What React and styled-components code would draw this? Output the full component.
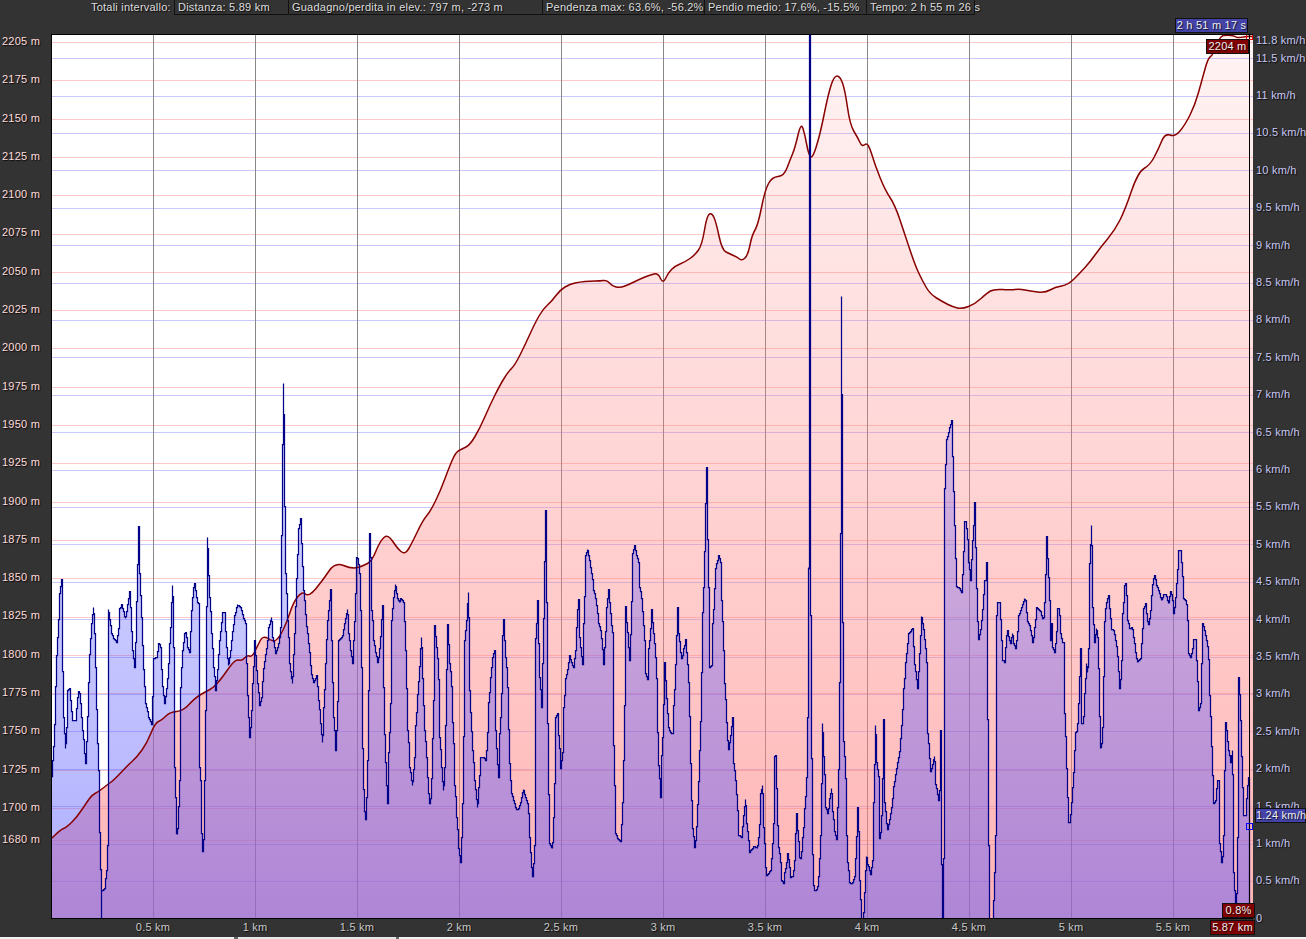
import React from 'react'
import styled, { createGlobalStyle } from 'styled-components'

const GlobalStyle = createGlobalStyle`
    html, body {
        margin: 0;
        padding: 0;
        background: #333333;
    }
`

// plot area in page pixels, the svg viewBox uses these directly
const PLOT = { left: 52, top: 35, width: 1201, height: 883, bottom: 918 }

// points read off the enlarged profile, x,y per crop
const trace = (x0, y0, sy, text) =>
    text.trim().split(/\s+/).map(pair => {
        const [x, y] = pair.split(',').map(Number)
        return [x0 + x / 3, y0 + y / sy]
    })

const speedPoints = [
    ...trace(40, 500, 3, `36,830 36,780 41,712 47,480 52,410 57,280 63,238 65,480 70,650 74,745 78,680 82,570 87,565 92,625 97,660 105,660
        110,600 113,572 118,580 122,640 127,690 132,760 135,790 140,680 146,480 152,380 158,322 163,400 165,500 170,710 175,810 177,900`),
    ...trace(0, 780, 3, `296,118 300,268 302,325 301,418 303,418 304,330 312,325 316,295 320,243 323,100 324,40`),
    ...trace(40, 500, 3, `203,328 209,370 214,400 220,415 228,425 234,385 238,325 243,312 248,330 254,355 260,320 267,272 270,320 275,440
        282,500 285,425 290,220 295,78 297,220 303,350 308,490 315,610 325,650 333,672 340,475 348,470 355,428 360,440 365,550 372,610
        380,550 388,430 395,255 398,350 403,800`),
    ...trace(0, 780, 3, `524,0 527,155 530,163 533,105 537,0`),
    ...trace(40, 500, 3, `420,560 425,460 432,400 436,395 442,440 447,455 453,330 458,265 462,250 470,305 475,310 478,800`),
    ...trace(0, 780, 3, `600,0 603,160 606,212 610,178 613,100 613,0`),
    ...trace(40, 500, 3, `500,110 503,210 508,290 513,400 520,500 525,570 530,520 537,420 542,375 547,335 552,335 557,430 563,495 568,470
        575,400 583,345 590,313 600,320 608,350 615,370 620,570 625,650 628,712 632,650 637,550 642,420 648,510 652,550 657,615 663,590
        668,510 680,430 685,380 692,350 697,410 705,460 715,430 720,380 728,-350 734,200 742,360 747,490 755,548 762,400 770,180 775,85
        780,55 785,180 790,270 797,370 805,430 812,520 820,545 828,525 835,600 840,670 845,725 850,620 855,490 860,370 870,268 875,520
        880,650 885,750 890,650 895,420 905,410 912,370 920,328 925,400 930,450 936,488 940,420 945,280 948,172`),
    ...trace(340, 520, 3, `52,113 57,160 62,345 65,635 68,780 71,865 75,898 78,830 81,720 84,510 87,38 90,110 94,270 100,360 105,395 112,425
        118,385 122,310 126,255 128,445 131,615 135,725 138,795 141,848 145,695 150,550 153,300 158,240 164,193 170,230 176,247 180,233
        190,245 195,390 199,505 202,630 208,740 215,795 222,710 226,615 230,535 236,455 242,350 248,535 253,630 258,710 263,810 268,850
        272,815 275,690 279,540 282,315 288,380 293,435 298,650 303,740 308,810 313,740 317,490 321,313 327,430 332,470 337,605 343,795
        349,890 354,985 360,1025 365,900 368,745 372,360 378,300 383,217 387,510 392,620 397,690 402,780 407,825 410,860 415,800 420,710
        428,710 436,720 440,660 445,545 450,470 456,410 462,390 465,630 470,720 474,770 478,640 483,520 486,345 489,298 494,400 500,460
        506,710 512,815 520,840 527,868 535,863 540,845 548,808 555,830 563,855 567,950 573,1040 577,1067 582,975 586,355 591,240 594,370
        598,470 603,562 607,430 611,160 616,-30 620,520 623,785 628,970 635,985 640,890 646,590 651,580 655,645 660,745 666,695 670,560
        675,475 680,455 687,405 692,425 699,440 705,390 710,275 714,238 718,345`),
    ...trace(570, 460, 3, `27,530 32,580 36,612 40,490 45,285 50,268 55,285 60,320 65,350 70,390 75,415 80,450 85,490 90,510 95,550 99,612
        103,560 108,440 114,388 118,425 122,490 126,515 128,815 132,975 136,1120 142,1135 150,1142 155,1060 158,955 162,735 165,437 169,485
        174,560 177,600 182,470 186,280 192,255 198,285 204,305 208,380 213,415 218,480 222,540 226,640 231,658 235,565 240,505 243,448
        248,510 254,570 258,655 262,815 265,915 270,1012 274,885 278,775 282,607 285,660 289,715 293,800 300,815 306,820 310,735 314,640
        318,525 321,442 325,520 330,575 334,595 340,565 345,538 350,600 355,665 359,870 363,1020 367,1105 372,1162 376,1140 380,1055
        388,870 392,695 396,455 400,380 404,165 408,22 410,190 414,380 418,620 423,615 427,490 431,405 435,325 439,310 444,285 450,305
        454,420 458,545 463,670 467,765 470,830 474,868 480,825 486,772 490,910 495,960 500,1030 505,1125 513,1130 518,1075 524,1018
        528,1090 533,1130 537,1175 545,1165 550,1157 560,1163 566,1115 571,1000 575,975 580,1100 585,1220 589,1245 600,1230 605,1170
        609,1090 612,888 616,885 620,1080 625,1160 630,1205 634,1260 639,1270 643,1235 648,1205 652,1178 656,1215 661,1250 667,1248
        672,1200 676,1120 678,1060 682,1110 687,1190 691,1195 697,1130 703,1045 708,950 711,770 714,320`),
    ...trace(790, 280, 2.45, `54,705 56,-600 58,-600 60,820 62,1070 65,1370 68,1480 73,1495 80,1490 85,1460 88,1415 92,1305 95,1085 98,1150 102,1210
        106,1290 112,1305 118,1270 122,1245 127,1300 132,1350 138,1370 142,1290 146,1105 150,620 152,38 155,765 160,1130 165,1220 168,1360
        172,1425 177,1475 185,1478 192,1460 197,1385 201,1292 205,1350 208,1470 212,1565 218,1565 222,1500 227,1410 232,1430 240,1455
        246,1420 250,1280 254,1090 258,1180 264,1215 267,1368 272,1340 276,1220 279,1075 283,1280 288,1330 291,1345 296,1325 303,1290
        310,1240 315,1210 320,1185 327,1155 333,1090 340,1000 345,935 350,900 353,865 360,860 366,852 372,940 377,970 381,1000 386,930
        390,870 392,822 398,850 403,880 408,935 412,1110 417,1170 420,1203 425,1190 431,1165 436,1235 440,1255 444,1275 447,1250 450,1103
        453,1430 456,1565 459,1415 463,510 467,393 473,375 478,360 483,343 488,490 492,600 495,680 498,750 507,755 513,765 518,690 522,590
        525,590 530,620 535,690 540,735 545,650 549,600 552,545 555,655 560,820 564,880 570,855 577,805 581,735 585,735 588,690 592,1075
        595,1385 598,1565 607,1565 612,1450 616,1360 618,820 622,790 628,790 632,870 637,930 642,935 647,875 651,858 656,880 660,890`),
    ...trace(1000, 520, 3, `35,340 40,370 45,385 50,345 55,285 60,270 65,255 71,235 75,240 80,300 87,315 92,340 97,365 103,320 108,262 115,268
        120,272 125,295 130,290 134,200 138,48 141,115 144,170 147,240 150,360 153,310 156,380 162,395 167,350 172,265 176,265 180,340
        186,365 191,365 193,580 197,715 200,805 204,905 208,905 213,845 217,800 222,690 226,635 230,630 234,550 240,385 244,610 248,605
        253,520 257,430 260,455 265,385 268,130 272,15 276,260 282,365 287,325 292,350 296,540 299,685 305,660 308,545 311,315 315,265
        320,235 324,225 328,265 332,325 340,330 345,360 350,390 353,440 358,505 364,420 367,280 372,195 376,188 382,300 388,325 395,320
        400,350 405,395 410,425 420,415 425,340 430,265 435,250 440,300 445,312 450,270 455,195 460,175 463,165 468,195 476,215 482,240
        490,222 497,222 503,250 510,212 515,230 520,280 525,230 530,160 535,90 540,90 545,150 550,235 557,240 562,300 565,400 570,410
        575,390 580,358 585,358 590,460 595,570 600,550 606,308 612,330 618,360 623,390 628,525 632,650 636,765 640,850 645,840 650,780
        655,780 658,970 663,1025 668,995 673,750 676,605 680,655 685,690 690,725 695,690 700,1055 705,1195 710,1070 715,470 720,600 725,780
        730,885 735,885 740,800 745,770 748,1195 750,1195 750,918`),
]

const elevationPoints = trace(0, 0, 1, `156,838 180,830 201,827 231,817 261,802 276,795 294,792 321,785 342,780 384,765 411,757 441,743 465,723
    486,720 510,712 549,711 585,698 615,692 639,688 666,678 705,659 726,661 741,655 756,657 771,647 789,635 819,642 837,638 861,622 879,603
    906,591 927,597 969,580 1005,562 1056,569 1089,566 1116,561 1140,541 1164,534 1191,548 1215,555 1236,543 1269,520 1290,512 1320,492
    1350,465 1368,452 1386,449 1410,445 1440,428 1470,405 1500,385 1524,372 1545,365 1575,345 1605,323 1629,309 1656,301 1680,290 1710,284
    1740,282 1770,281 1800,281 1821,280 1836,286 1860,288 1890,284 1920,279 1950,275 1974,273 1989,284 2004,273 2025,266 2055,262 2085,255
    2106,245 2121,215 2136,213 2148,222 2166,250 2190,254 2211,257 2226,261 2244,255 2256,235 2274,225 2295,190 2316,177 2352,176 2370,160
    2385,148 2403,122 2415,135 2424,152 2436,160 2460,135 2484,95 2502,76 2520,76 2535,90 2550,125 2574,138 2586,147 2604,142 2625,165
    2655,190 2685,205 2715,235 2745,265 2766,280 2790,294 2829,302 2859,307 2886,309 2925,304 2961,293 2982,289 3030,290 3060,289 3090,291
    3135,293 3165,287 3204,285 3240,273 3270,262 3300,248 3345,230 3375,210 3414,172 3450,165 3474,150 3495,133 3525,137 3555,125 3585,105
    3606,80 3624,58 3639,55 3660,36 3681,35 3705,36 3711,38 3750,36 3759,37`)

// speed is drawn in pixel columns: fill in every column between samples, then step
const stepPath = points => {
    const parts = [`M${Math.round(points[0][0]) + 0.5} ${Math.round(points[0][1]) + 0.5}`]
    let column = Math.round(points[0][0])
    const stepTo = (x, y) => {
        const next = Math.min(Math.max(column, x), 1249)
        parts.push(next === column ? `V${Math.round(y) + 0.5}` : `H${next + 0.5} V${Math.round(y) + 0.5}`)
        column = next
    }
    for (let i = 1; i < points.length; i++) {
        const [x0, y0] = points[i - 1]
        const [x1, y1] = points[i]
        for (let c = Math.ceil(x0); c < x1; c++) {
            stepTo(c, y0 + (y1 - y0) * (c - x0) / (x1 - x0))
        }
        stepTo(Math.round(x1), y1)
    }
    return parts.join(' ')
}

// elevation is a soft curve, midpoints between samples smooth the corners
const curvePath = points => {
    const parts = [`M${points[0][0]} ${points[0][1]}`]
    for (let i = 1; i < points.length - 1; i++) {
        const [x, y] = points[i]
        const [nx, ny] = points[i + 1]
        parts.push(`Q${x.toFixed(1)} ${y} ${((x + nx) / 2).toFixed(1)} ${(y + ny) / 2}`)
    }
    const last = points[points.length - 1]
    parts.push(`L${last[0]} ${last[1]}`)
    return parts.join(' ')
}

const closeArea = (path, right) => `${path} L${right} ${PLOT.bottom} L${PLOT.left} ${PLOT.bottom} Z`

const elevationTicks = [2205, 2175, 2150, 2125, 2100, 2075, 2050, 2025, 2000, 1975, 1950, 1925, 1900, 1875, 1850, 1825, 1800, 1775, 1750, 1725, 1700]
const speedTicks = ['11.5', '11', '10.5', '10', '9.5', '9', '8.5', '8', '7.5', '7', '6.5', '6', '5.5', '5', '4.5', '4', '3.5', '3', '2.5', '2', '1.5', '1', '0.5']
const distanceTicks = ['0.5', '1', '1.5', '2', '2.5', '3', '3.5', '4', '4.5', '5', '5.5']
const summaryCells = [
    { text: 'Distanza: 5.89 km', width: 114 },
    { text: 'Guadagno/perdita in elev.: 797 m, -273 m', width: 254 },
    { text: 'Pendenza max: 63.6%, -56.2%', width: 162 },
    { text: 'Pendio medio: 17.6%, -15.5%', width: 162 },
    { text: 'Tempo: 2 h 55 m 26 s', width: 109 },
]

const Page = styled.div`
    width: 1306px;
    height: 939px;
    display: flex;
    flex-direction: column;
    overflow: hidden;
    background-color: #333333;
    font-family: "Liberation Sans", Arial, sans-serif;
    font-size: 11px;
    letter-spacing: 0.22px;
    text-shadow: 1px 1px 1px rgba(0, 0, 0, 0.8);
`

const SummaryBar = styled.div`
    height: 15px;
    margin-bottom: 19px;
    padding-left: 91px;
    display: flex;
    color: #dddddd;
    line-height: 14px;
`

const SummaryTitle = styled.div`
    width: 83px;
    white-space: nowrap;
`

const SummaryCell = styled.div`
    width: ${props => props.$width}px;
    box-sizing: border-box;
    padding-left: 3px;
    border-left: 1px solid #111111;
    border-bottom: 1px solid #111111;
    white-space: nowrap;

    &:last-child {
        border-right: 1px solid #111111;
    }
`

const ChartGrid = styled.div`
    display: grid;
    grid-template-columns: 51px 1202px 53px;
    grid-template-rows: 885px 18px;
`

const ElevationAxis = styled.div`
    margin-top: -12px;
    padding-left: 2px;
    color: #ffdcdc;
`

const ElevationTick = styled.div`
    height: 38.3px;
    line-height: 38.3px;
    margin-top: ${props => props.$pull || 0}px;
    white-space: nowrap;
`

const SpeedAxis = styled.div`
    margin-top: -12px;
    padding-left: 3px;
    color: #c8c8f4;
`

const SpeedTick = styled.div`
    height: 37.4px;
    line-height: 37.4px;
    margin-bottom: ${props => props.$pull || 0}px;
    white-space: nowrap;
`

const PlotFrame = styled.div`
    position: relative;
    z-index: 1;
    border-left: 1px solid #000000;
    border-top: 1px solid #000000;
    border-bottom: 1px solid #000000;
`

const PlotSvg = styled.svg`
    display: block;
`

const DistanceAxis = styled.div`
    grid-column: 1 / -1;
    padding-left: 102px;
    display: flex;
    color: #c8c8c8;
    line-height: 17px;
`

const DistanceTick = styled.div`
    width: 102px;
    text-align: center;
    white-space: nowrap;
`

const Pill = styled.div`
    position: absolute;
    box-sizing: border-box;
    height: 15px;
    line-height: 13px;
    text-align: center;
    white-space: nowrap;
    color: #eeeeee;
    border: 1px solid #111111;
    background-color: ${props => (props.$tone === 'blue' ? '#4343a8' : '#800000')};
`

const TimePill = styled(Pill)`
    top: -17px;
    left: 1123px;
    width: 73px;
`

const ElevationPill = styled(Pill)`
    top: 4px;
    left: 1154px;
    width: 43px;
`

const SpeedPill = styled(Pill)`
    top: 773px;
    left: 1203px;
    width: 51px;
`

const SlopePill = styled(Pill)`
    top: 868px;
    left: 1170px;
    width: 33px;
`

const DistancePill = styled(Pill)`
    top: 885px;
    left: 1158px;
    width: 45px;
`

const BottomEdge = styled.div`
    height: 2px;
    background: linear-gradient(to right, #f2f2f2 234px, #666666 234px 238px, #e6eae6 238px 396px, #666666 396px 399px, #f2f2f2 399px);
`

const ChartDrawing = () => {
    const redLines = [...elevationTicks.map((_, i) => 42.5 + i * 38.3), 840]
    const blueLines = speedTicks.map((_, i) => 58.7 + i * 37.4)
    const kmLines = distanceTicks.map((_, i) => 153.5 + i * 102)
    const crisp = { shapeRendering: 'crispEdges' }
    const elevationLine = curvePath(elevationPoints)
    const speedLine = stepPath(speedPoints)

    return (
        <PlotSvg width={PLOT.width} height={PLOT.height} viewBox={`${PLOT.left} ${PLOT.top} ${PLOT.width} ${PLOT.height}`}>
            <defs>
                <linearGradient id="elevationFill" gradientUnits="userSpaceOnUse" x1="0" y1={PLOT.top} x2="0" y2={PLOT.bottom}>
                    <stop offset="0" stopColor="#ff8282" stopOpacity="0.09" />
                    <stop offset="1" stopColor="#ff8282" stopOpacity="0.6" />
                </linearGradient>
                <linearGradient id="speedFill" gradientUnits="userSpaceOnUse" x1="0" y1={PLOT.top} x2="0" y2={PLOT.bottom}>
                    <stop offset="0" stopColor="#5050ff" stopOpacity="0.05" />
                    <stop offset="1" stopColor="#5050ff" stopOpacity="0.46" />
                </linearGradient>
            </defs>
            <rect x={PLOT.left} y={PLOT.top} width={PLOT.width} height={PLOT.height} fill="#ffffff" />
            {redLines.map(y => (
                <line key={y} x1={PLOT.left} x2="1253" y1={y} y2={y} stroke="#ffc8c8" {...crisp} />
            ))}
            {blueLines.map(y => (
                <line key={y} x1={PLOT.left} x2="1253" y1={y} y2={y} stroke="#c8c8ff" {...crisp} />
            ))}
            {kmLines.map(x => (
                <line key={x} x1={x} x2={x} y1={PLOT.top} y2={PLOT.bottom} stroke="#888888" {...crisp} />
            ))}
            <path d={closeArea(elevationLine, 1253)} fill="url(#elevationFill)" />
            <path d={closeArea(speedLine, 1250.5)} fill="url(#speedFill)" {...crisp} />
            <path d={elevationLine} fill="none" stroke="#880000" strokeWidth="1.5" />
            <path d={speedLine} fill="none" stroke="#000088" strokeWidth="1.25" />
            <line x1="1249.5" x2="1249.5" y1={PLOT.top} y2={PLOT.bottom} stroke="#000000" {...crisp} />
            <rect x="1246.5" y="33.5" width="6" height="6" fill="none" stroke="#ff0000" {...crisp} />
            <rect x="1246.5" y="823.5" width="6" height="6" fill="none" stroke="#0000ff" {...crisp} />
        </PlotSvg>
    )
}

const App = () => (
    <Page>
        <GlobalStyle />
        <SummaryBar>
            <SummaryTitle>Totali intervallo:</SummaryTitle>
            {summaryCells.map(cell => (
                <SummaryCell key={cell.text} $width={cell.width}>{cell.text}</SummaryCell>
            ))}
        </SummaryBar>
        <ChartGrid>
            <ElevationAxis>
                {elevationTicks.map(value => (
                    <ElevationTick key={value}>{value} m</ElevationTick>
                ))}
                <ElevationTick $pull={-6.3}>1680 m</ElevationTick>
            </ElevationAxis>
            <PlotFrame>
                <ChartDrawing />
                <TimePill $tone="blue">2 h 51 m 17 s</TimePill>
                <ElevationPill>2204 m</ElevationPill>
                <SpeedPill $tone="blue">1.24 km/h</SpeedPill>
                <SlopePill>0.8%</SlopePill>
                <DistancePill>5.87 km</DistancePill>
            </PlotFrame>
            <SpeedAxis>
                <SpeedTick $pull={-19.7}>11.8 km/h</SpeedTick>
                {speedTicks.map(value => (
                    <SpeedTick key={value}>{value} km/h</SpeedTick>
                ))}
                <SpeedTick>0</SpeedTick>
            </SpeedAxis>
            <DistanceAxis>
                {distanceTicks.map(value => (
                    <DistanceTick key={value}>{value} km</DistanceTick>
                ))}
            </DistanceAxis>
        </ChartGrid>
        <BottomEdge />
    </Page>
)

export default App
